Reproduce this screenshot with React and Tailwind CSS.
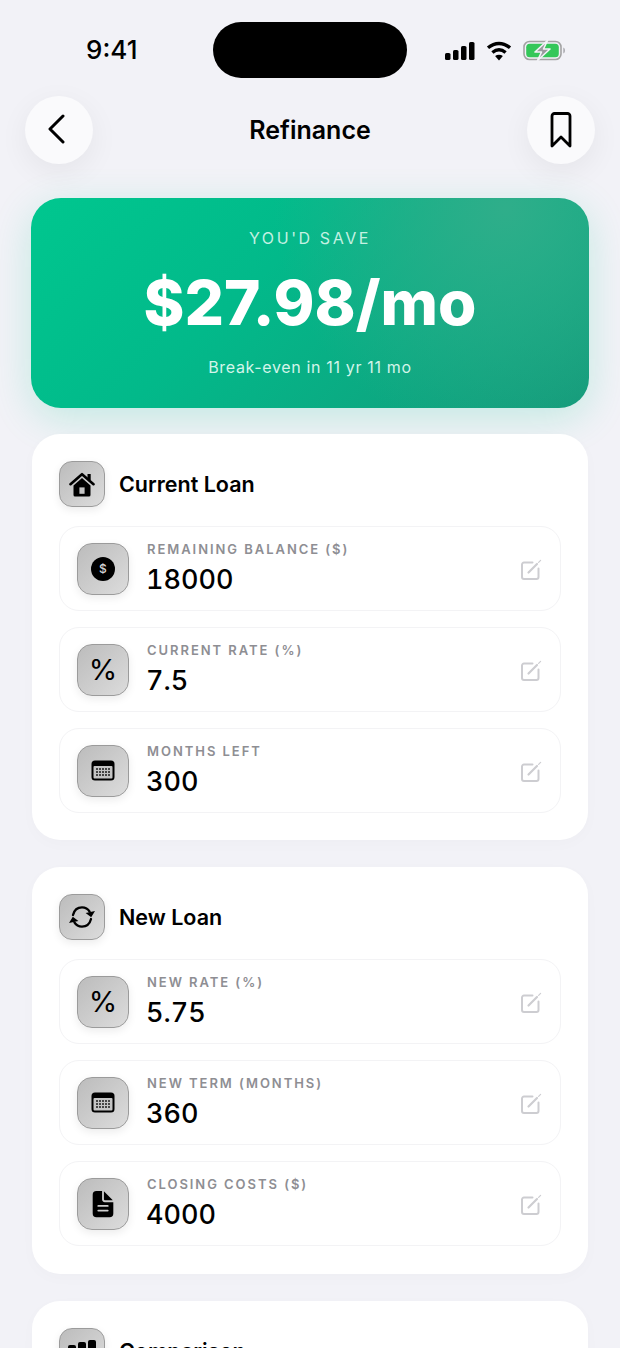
import React from 'react';
import { IoDocumentText } from 'react-icons/io5';

const font = { fontFamily: 'Inter, "Liberation Sans", sans-serif' };

const DollarIcon = () => (
  <div className="w-[24px] h-[24px] rounded-full bg-black flex items-center justify-center text-[12px] font-medium text-[#d4d4d4]">$</div>
);

const PercentIcon = () => <span className="text-[29px] leading-none font-normal text-black">%</span>;

const CalendarIcon = () => (
  <svg width="24" height="21" viewBox="0 0 24 21">
    <rect x="0.5" y="0.5" width="23" height="20" rx="3.5" fill="#000" />
    <rect x="2.5" y="6" width="19" height="12.5" rx="1" fill="#c4c4c4" />
    {[9, 12, 15].map((y) =>
      [6, 9, 12, 15, 18].map((x) => <rect key={`${x}-${y}`} x={x - 0.8} y={y - 0.8} width="1.6" height="1.6" fill="#000" />)
    )}
  </svg>
);

const HomeIcon = () => (
  <svg width="26" height="25" viewBox="0 0 26 25">
    <path d="M1.5 12.2L13 2.2l11.5 10" fill="none" stroke="#000" strokeWidth="2.6" strokeLinecap="round" strokeLinejoin="round" />
    <rect x="18.5" y="2" width="3.2" height="6" fill="#000" />
    <path d="M4.5 13.4L13 6l8.5 7.4V23a1.6 1.6 0 0 1-1.6 1.6H6.1A1.6 1.6 0 0 1 4.5 23z" fill="#000" />
    <rect x="10.4" y="15.4" width="5.2" height="6.4" fill="#c4c4c4" />
  </svg>
);

const SyncIcon = () => (
  <svg width="28" height="26" viewBox="0 0 28 26" fill="none">
    <path d="M5 11C6.2 6.2 9.6 3.4 14 3.4c3.2 0 6 1.5 7.6 4.2" stroke="#000" strokeWidth="2.3" strokeLinecap="round" />
    <path d="M23 15c-1.2 4.8-4.6 7.6-9 7.6-3.2 0-6-1.5-7.6-4.2" stroke="#000" strokeWidth="2.3" strokeLinecap="round" />
    <path d="M27 7l-3.8 6.2L17.6 9z" fill="#000" />
    <path d="M1 19l3.8-6.2 5.6 4.2z" fill="#000" />
  </svg>
);

const BarsIcon = () => (
  <svg width="30" height="24" viewBox="0 0 30 24" fill="#000">
    <rect x="1" y="6" width="8" height="17" rx="2" />
    <rect x="11" y="3" width="8" height="20" rx="2" />
    <rect x="21" y="1" width="8" height="22" rx="2" />
  </svg>
);

const EditIcon = () => (
  <svg width="22" height="22" viewBox="0 0 22 22" fill="none" className="shrink-0 mt-[2px]">
    <path d="M12.5 3.5H4a2 2 0 0 0-2 2V18a2 2 0 0 0 2 2h12.5a2 2 0 0 0 2-2V9.5" stroke="#cdcdd1" strokeWidth="2" strokeLinecap="round" />
    <path d="M8.5 13.5l8.5-8.5" stroke="#cdcdd1" strokeWidth="2.2" strokeLinecap="round" />
    <path d="M18.6 3.4L20.6 1.4" stroke="#cdcdd1" strokeWidth="1.2" strokeLinecap="round" />
  </svg>
);

const IconTile = ({ small, children }) => (
  <div
    className={`shrink-0 flex items-center justify-center border border-[#9b9b9b] bg-linear-to-br from-[#bcbcbc] to-[#dcdcdc] shadow-[0_3px_8px_rgba(0,0,0,0.08)] ${
      small ? 'w-[46px] h-[46px] rounded-[13px]' : 'w-[52px] h-[52px] rounded-[15px]'
    }`}
  >
    {children}
  </div>
);

const FieldRow = ({ icon, label, value }) => (
  <div className="h-[85px] rounded-[20px] border border-[#f3f3f5] bg-white pl-[17px] pr-[18px] flex items-center">
    <IconTile>{icon}</IconTile>
    <div className="ml-[18px] flex-1 min-w-0 pt-[1px]">
      <div className="text-[13px] leading-[16px] font-semibold tracking-[1.95px] text-[#8e8e93] uppercase">{label}</div>
      <div className="mt-[6px] -ml-[1px] text-[27px] leading-[34px] font-medium text-black tabular-nums">{value}</div>
    </div>
    <EditIcon />
  </div>
);

const Section = ({ icon, title, rows, tall }) => (
  <div className={`mx-[32px] bg-white rounded-[28px] px-[27px] pt-[27px] shadow-[0_4px_16px_rgba(0,0,0,0.02)] ${tall ? 'pb-[28px]' : 'pb-[27px]'}`}>
    <div className="flex items-center gap-[14px] h-[46px]">
      <IconTile small>{icon}</IconTile>
      <div className="text-[21.5px] font-semibold text-black">{title}</div>
    </div>
    {rows && (
      <div className="mt-[19px] flex flex-col gap-[16px]">
        {rows.map((r) => (
          <FieldRow key={r.label} {...r} />
        ))}
      </div>
    )}
  </div>
);

const StatusBar = () => (
  <div className="h-[96px] relative">
    <div className="absolute left-[86px] top-[34px] text-[26px] leading-[32px] font-medium text-black">9:41</div>
    <div className="absolute left-[213px] top-[22px] w-[194px] h-[56px] rounded-[28px] bg-black" />
    <svg className="absolute left-[444px] top-[41px]" width="32" height="20" viewBox="0 0 32 20" fill="#000">
      <rect x="1" y="12" width="5.5" height="7" rx="1.6" />
      <rect x="9" y="9" width="5.5" height="10" rx="1.6" />
      <rect x="17" y="5" width="5.5" height="14" rx="1.6" />
      <rect x="25" y="1" width="5.5" height="18" rx="1.6" />
    </svg>
    <svg className="absolute left-[486px] top-[41px]" width="26" height="20" viewBox="0 0 26 20" fill="none" stroke="#000" strokeWidth="3.4">
      <path d="M2 6.8C8.8 1 17.2 1 24 6.8" />
      <path d="M6.4 11.5c4.3-3.6 8.9-3.6 13.2 0" />
      <path d="M13 19.5l-3.9-4.4c2.5-1.7 5.3-1.7 7.8 0z" fill="#000" stroke="none" />
    </svg>
    <svg className="absolute left-[523px] top-[40px]" width="44" height="21" viewBox="0 0 44 21">
      <rect x="1" y="1.5" width="37" height="18" rx="5.5" fill="none" stroke="#a3a3a3" strokeWidth="1.6" />
      <rect x="3.2" y="3.7" width="32.6" height="13.6" rx="3.5" fill="#34c759" />
      <path d="M40.5 7.5c1.6.5 1.6 5.5 0 6z" fill="#8e8e93" />
      <path d="M24.5 0.5L12 12h6.5l-4 8.5L27 9h-6.5z" fill="#9a9a9e" stroke="#f2f2f7" strokeWidth="1.6" strokeLinejoin="round" />
    </svg>
  </div>
);

const NavBar = () => (
  <div className="h-[68px] px-[25px] flex items-center justify-between">
    <button className="w-[68px] h-[68px] rounded-full bg-[#fafafc] flex items-center justify-center shadow-[0_8px_30px_rgba(0,0,0,0.06)]">
      <svg width="20" height="30" viewBox="0 0 20 30" fill="none" className="-mt-[2px] -ml-[4px]">
        <path d="M16 2L3 15l13 13" stroke="#000" strokeWidth="3" strokeLinecap="round" strokeLinejoin="round" />
      </svg>
    </button>
    <h1 className="text-[25px] font-semibold text-black translate-y-[1px]">Refinance</h1>
    <button className="w-[68px] h-[68px] rounded-full bg-[#fafafc] flex items-center justify-center shadow-[0_8px_30px_rgba(0,0,0,0.06)]">
      <svg width="24" height="36" viewBox="0 0 24 36" fill="none">
        <path d="M3 4a2.5 2.5 0 0 1 2.5-2.5h13A2.5 2.5 0 0 1 21 4v30l-9-9-9 9z" stroke="#000" strokeWidth="2.8" strokeLinejoin="round" />
      </svg>
    </button>
  </div>
);

const Hero = () => (
  <div className="mt-[34px] mx-[31px] h-[210px] rounded-[30px] bg-[radial-gradient(circle_at_85%_5%,#2fae8a_0%,rgba(47,174,138,0)_45%),linear-gradient(135deg,#00c78f_0%,#02b98a_40%,#159a7a_100%)] shadow-[0_10px_40px_rgba(0,199,143,0.2)] flex flex-col items-center text-center">
    <div className="mt-[30px] text-[16px] leading-[20px] tracking-[2.6px] text-[#c4f1e2]">YOU'D SAVE</div>
    <div className="mt-[20px] text-[62px] leading-[70px] font-extrabold text-white">$27.98/mo</div>
    <div className="mt-[19px] text-[16px] leading-[20px] tracking-[0.66px] text-[#d3f5ea]">Break-even in 11 yr 11 mo</div>
  </div>
);

export default function App() {
  const currentRows = [
    { icon: <DollarIcon />, label: 'Remaining Balance ($)', value: '18000' },
    { icon: <PercentIcon />, label: 'Current Rate (%)', value: '7.5' },
    { icon: <CalendarIcon />, label: 'Months Left', value: '300' },
  ];
  const newRows = [
    { icon: <PercentIcon />, label: 'New Rate (%)', value: '5.75' },
    { icon: <CalendarIcon />, label: 'New Term (Months)', value: '360' },
    { icon: <IoDocumentText size={30} className="text-black" />, label: 'Closing Costs ($)', value: '4000' },
  ];

  return (
    <div className="w-[620px] h-[1348px] overflow-hidden bg-[#f2f2f7]" style={font}>
      <StatusBar />
      <NavBar />
      <Hero />
      <div className="mt-[26px] flex flex-col gap-[27px]">
        <Section icon={<HomeIcon />} title="Current Loan" rows={currentRows} />
        <Section icon={<SyncIcon />} title="New Loan" rows={newRows} tall />
        <Section icon={<BarsIcon />} title="Comparison" />
      </div>
    </div>
  );
}
